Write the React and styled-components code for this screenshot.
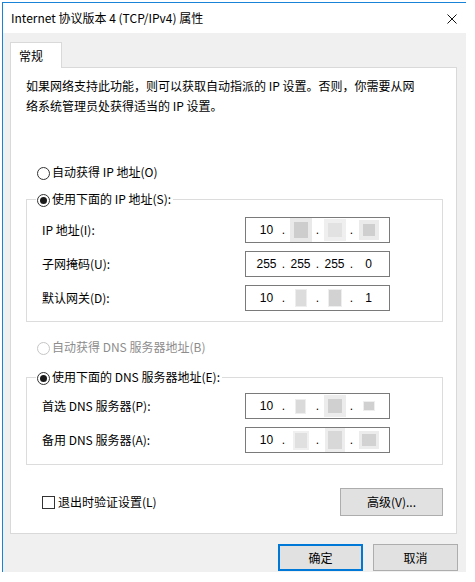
import React from "react";
import styled, { createGlobalStyle } from "styled-components";

const Global = createGlobalStyle`
  html, body { margin: 0; padding: 0; background: #ffffff; }
  body {
    font-family: "Noto Sans CJK SC", "Microsoft YaHei", sans-serif;
    font-size: 12px;
    color: #000;
  }
  * { box-sizing: border-box; }
`;

const Page = styled.div`
  padding: 2px 0 0 2px;
`;

const Window = styled.div`
  width: 464px;
  height: 570px;
  border-top: 1px solid #1883d7;
  border-left: 1px solid #1883d7;
  background: #f0f0f0;
  display: flex;
  flex-direction: column;
`;

const TitleBar = styled.div`
  height: 30px;
  flex: none;
  background: #ffffff;
  display: flex;
  align-items: center;
  justify-content: space-between;
  padding: 0 9px 0 8px;
`;

const Title = styled.div`
  font-size: 12px;
  line-height: 20px;
  color: #000;
`;

const Close = styled.svg`
  display: block;
  margin-top: 2px;
`;

const Body = styled.div`
  flex: 1;
  padding: 9px 8px 0 7px;
  display: flex;
  flex-direction: column;
`;

const Tabs = styled.div`
  display: flex;
  position: relative;
  z-index: 1;
  margin-bottom: -1px;
`;

const Tab = styled.div`
  width: 52px;
  height: 26px;
  background: #ffffff;
  border: 1px solid #d9d9d9;
  border-bottom: none;
  padding: 3px 0 0 8px;
  line-height: 20px;
`;

const Panel = styled.div`
  width: 447px;
  height: 467px;
  background: #ffffff;
  border: 1px solid #d9d9d9;
  padding: 8px 13px 0 15px;
  display: flex;
  flex-direction: column;
`;

const Desc = styled.p`
  margin: 0;
  line-height: 20px;
`;

const RadioRow = styled.label`
  display: flex;
  align-items: center;
  height: 20px;
  line-height: 20px;
  margin-top: ${(p) => p.$mt || 0}px;
  padding-left: ${(p) => p.$pl || 0}px;
  color: ${(p) => (p.$disabled ? "#8d8d8d" : "#000")};
  white-space: nowrap;
`;

const RadioCircle = styled.span`
  width: 13px;
  height: 13px;
  border-radius: 50%;
  border: 1px solid ${(p) => (p.$disabled ? "#c6c6c6" : "#333333")};
  background: #fff;
  display: inline-flex;
  align-items: center;
  justify-content: center;
  margin-right: 2px;
  margin-top: 2px;
  flex: none;
  &::after {
    content: "";
    width: 7px;
    height: 7px;
    border-radius: 50%;
    background: #1a1a1a;
    display: ${(p) => (p.$checked ? "block" : "none")};
  }
`;

const Group = styled.fieldset`
  margin: ${(p) => p.$mt || 0}px 0 0 0;
  padding: 0;
  border: 1px solid #dcdcdc;
  min-width: 0;
`;

const Legend = styled.legend`
  margin-left: 9px;
  padding: 0 2px 0 1px;
`;

const Rows = styled.div`
  display: flex;
  flex-direction: column;
  gap: 8px;
  padding: ${(p) => p.$pt}px 0 ${(p) => p.$pb}px 15px;
`;

const Row = styled.div`
  display: grid;
  grid-template-columns: 203px 145px;
  align-items: center;
  height: 26px;
`;

const Label = styled.span`
  line-height: 20px;
`;

const IpBox = styled.div`
  height: 26px;
  border: 1px solid #7a7a7a;
  background: #fff;
  display: flex;
  align-items: center;
  padding-left: 5px;
  font-family: "Liberation Sans", Arial, sans-serif;
  font-size: 12px;
  color: #000;
`;

const Seg = styled.span`
  width: 31px;
  display: flex;
  justify-content: center;
  align-items: center;
  height: 22px;
`;

const Dot = styled.span`
  width: 3px;
  text-align: center;
  overflow: visible;
  display: flex;
  justify-content: center;
`;

const Blur = styled.span`
  display: block;
  width: ${(p) => p.$w}px;
  height: ${(p) => p.$h}px;
  background: ${(p) => p.$c || "#d2d2d2"};
  box-shadow: 0 0 0 ${(p) => p.$s ?? 3}px ${(p) => p.$o || "#ececec"};
`;

const BottomRow = styled.div`
  margin-top: 23px;
  display: flex;
  align-items: center;
  justify-content: space-between;
  height: 28px;
`;

const CheckRow = styled.label`
  display: flex;
  align-items: center;
  padding-left: 16px;
  line-height: 20px;
`;

const CheckBox = styled.span`
  width: 13px;
  height: 13px;
  border: 1px solid #333;
  background: #fff;
  margin-right: 3px;
  margin-top: 1px;
  flex: none;
`;

const Button = styled.button`
  width: ${(p) => p.$w}px;
  height: ${(p) => p.$h}px;
  background: #e1e1e1;
  border: ${(p) => (p.$primary ? "2px solid #0078d7" : "1px solid #adadad")};
  font-family: inherit;
  font-size: 12px;
  color: #000;
  padding: 0;
  line-height: 20px;
`;

const Footer = styled.div`
  margin-top: 10px;
  display: flex;
  justify-content: flex-end;
  gap: 10px;
`;

const Ip = ({ parts }) => (
  <IpBox>
    {parts.map((p, i) => (
      <React.Fragment key={i}>
        {i > 0 && <Dot>.</Dot>}
        <Seg>{typeof p === "string" ? p : <Blur {...p} />}</Seg>
      </React.Fragment>
    ))}
  </IpBox>
);

export default function App() {
  return (
    <Page>
      <Global />
      <Window>
        <TitleBar>
          <Title>Internet 协议版本 4 (TCP/IPv4) 属性</Title>
          <Close width="10" height="10" viewBox="0 0 10 10">
            <path d="M0.5 0.5 L9.5 9.5 M9.5 0.5 L0.5 9.5" stroke="#111" strokeWidth="1" fill="none" />
          </Close>
        </TitleBar>
        <Body>
          <Tabs>
            <Tab>常规</Tab>
          </Tabs>
          <Panel>
            <Desc>
              如果网络支持此功能，则可以获取自动指派的 IP 设置。否则，你需要从网
              <br />
              络系统管理员处获得适当的 IP 设置。
            </Desc>
            <RadioRow $mt={46} $pl={11}>
              <RadioCircle />
              自动获得 IP 地址(O)
            </RadioRow>
            <Group $mt={7}>
              <Legend>
                <RadioRow>
                  <RadioCircle $checked />
                  使用下面的 IP 地址(S):
                </RadioRow>
              </Legend>
              <Rows $pt={8} $pb={10}>
                <Row>
                  <Label>IP 地址(I):</Label>
                  <Ip
                    parts={[
                      "10",
                      { $w: 14, $h: 16, $c: "#cdcdcd", $s: 4, $o: "#e9e9e9" },
                      { $w: 14, $h: 14, $c: "#e2e2e2", $s: 4, $o: "#efefef" },
                      { $w: 12, $h: 12, $c: "#cfcfcf", $s: 4, $o: "#ebebeb" },
                    ]}
                  />
                </Row>
                <Row>
                  <Label>子网掩码(U):</Label>
                  <Ip parts={["255", "255", "255", "0"]} />
                </Row>
                <Row>
                  <Label>默认网关(D):</Label>
                  <Ip
                    parts={[
                      "10",
                      { $w: 10, $h: 16, $c: "#dcdcdc", $s: 1, $o: "#eeeeee" },
                      { $w: 12, $h: 16, $c: "#d2d2d2", $s: 1, $o: "#eeeeee" },
                      "1",
                    ]}
                  />
                </Row>
              </Rows>
            </Group>
            <RadioRow $mt={15} $pl={11} $disabled>
              <RadioCircle $disabled />
              自动获得 DNS 服务器地址(B)
            </RadioRow>
            <Group $mt={10}>
              <Legend>
                <RadioRow>
                  <RadioCircle $checked />
                  使用下面的 DNS 服务器地址(E):
                </RadioRow>
              </Legend>
              <Rows $pt={6} $pb={11}>
                <Row>
                  <Label>首选 DNS 服务器(P):</Label>
                  <Ip
                    parts={[
                      "10",
                      { $w: 9, $h: 13, $c: "#dadada", $s: 1, $o: "#eeeeee" },
                      { $w: 14, $h: 14, $c: "#d0d0d0", $s: 4, $o: "#ececec" },
                      { $w: 10, $h: 8, $c: "#d0d0d0", $s: 1, $o: "#eeeeee" },
                    ]}
                  />
                </Row>
                <Row>
                  <Label>备用 DNS 服务器(A):</Label>
                  <Ip
                    parts={[
                      "10",
                      { $w: 12, $h: 15, $c: "#e0e0e0", $s: 2, $o: "#f0f0f0" },
                      { $w: 14, $h: 18, $c: "#d8d8d8", $s: 3, $o: "#ededed" },
                      { $w: 14, $h: 12, $c: "#d2d2d2", $s: 3, $o: "#ececec" },
                    ]}
                  />
                </Row>
              </Rows>
            </Group>
            <BottomRow>
              <CheckRow>
                <CheckBox />
                退出时验证设置(L)
              </CheckRow>
              <Button $w={103} $h={28}>高级(V)...</Button>
            </BottomRow>
          </Panel>
          <Footer>
            <Button $primary $w={85} $h={27}>确定</Button>
            <Button $w={85} $h={27}>取消</Button>
          </Footer>
        </Body>
      </Window>
    </Page>
  );
}
